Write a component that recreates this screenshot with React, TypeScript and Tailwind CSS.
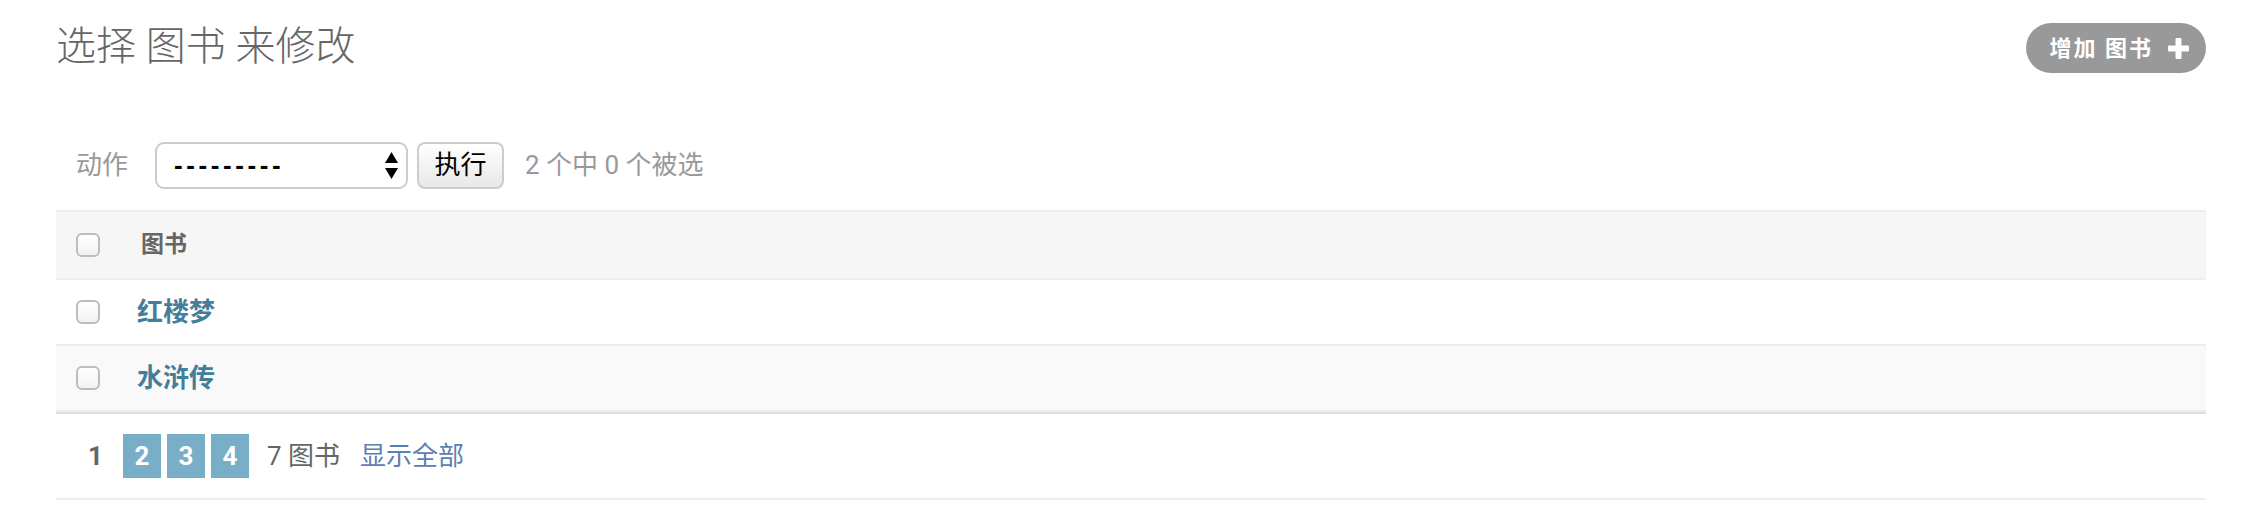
import React from 'react';

const books = [
  { id: 1, title: '红楼梦' },
  { id: 2, title: '水浒传' },
];

function Box() {
  return (
    <span className="block w-[24px] h-[24px] rounded-[6px] border-2 border-[#bdbdbd] bg-gradient-to-b from-white to-[#f2f2f2]" />
  );
}

export default function App() {
  return (
    <div className="min-h-[530px] bg-white pt-[23px] pl-[56px] pr-[48px] font-['Roboto','Noto_Sans_CJK_SC',sans-serif]">
      {/* header */}
      <div className="flex justify-between items-start">
        <h1 className="h-[48px] leading-[48px] text-[40px] font-light text-[#666]">选择 图书 来修改</h1>
        <a className="flex items-center h-[50px] pl-[24px] pr-[17px] rounded-full bg-[#999] text-white text-[22px] tracking-[2px] font-bold">
          <span>增加 图书</span>
          <svg className="ml-[15px]" width="21" height="21" viewBox="0 0 21 21">
            <rect x="0" y="7.5" width="21" height="6" rx="1" fill="#fff" />
            <rect x="7.5" y="0" width="6" height="21" rx="1" fill="#fff" />
          </svg>
        </a>
      </div>

      {/* actions */}
      <div className="mt-[47px] h-[90px] px-[20px] flex items-center text-[26px] text-[#999]">
        <span className="mr-[27px]">动作</span>
        <div className="relative w-[253px] h-[47px] rounded-[9px] border-2 border-[#ccc] bg-white flex items-center pl-[17px]">
          <span className="font-['Liberation_Sans',sans-serif] font-bold text-black text-[26px] tracking-[3.6px] leading-none">---------</span>
          <svg className="absolute right-[8px] top-[8px]" width="13" height="27" viewBox="0 0 13 27">
            <polygon points="6.5,0 13,11 0,11" fill="#000" />
            <polygon points="0,16 13,16 6.5,27" fill="#000" />
          </svg>
        </div>
        <button className="ml-[9px] w-[87px] h-[47px] rounded-[8px] border-2 border-[#ccc] bg-gradient-to-b from-white to-[#e8e8e8] text-black text-[26px] leading-none">
          执行
        </button>
        <span className="ml-[21px]">2 个中 0 个被选</span>
      </div>

      {/* results */}
      <div className="border-t-2 border-[#eee]">
        <div className="flex items-center h-[68px] bg-[#f6f6f6] border-b-2 border-[#eee]">
          <div className="w-[65px] pl-[20px]"><Box /></div>
          <span className="pl-[20px] text-[23px] font-bold text-[#666]">图书</span>
        </div>
        {books.map((b, i) => (
          <div
            key={b.id}
            className={`flex items-center h-[66px] border-b-2 border-[#eee] ${i % 2 === 1 ? 'bg-[#f9f9f9]' : 'bg-white'}`}
          >
            <div className="w-[65px] pl-[20px]"><Box /></div>
            <a className="pl-[16px] text-[26px] font-bold text-[#447e9b]">{b.title}</a>
          </div>
        ))}
      </div>

      {/* paginator */}
      <div className="border-t-2 border-[#ddd] border-b-2 border-b-[#eee] py-[20px] pl-[20px] flex items-center h-[88px] text-[26px] text-[#666]">
        <span className="px-[12px] font-bold leading-[44px]">1</span>
        <div className="ml-[8px] flex gap-[6px]">
          {[2, 3, 4].map((n) => (
            <a key={n} className="w-[38px] h-[44px] flex items-center justify-center bg-[#79aec8] text-white font-bold">
              {n}
            </a>
          ))}
        </div>
        <span className="ml-[18px]">7 图书</span>
        <a className="ml-[20px] text-[#5b80b2]">显示全部</a>
      </div>
    </div>
  );
}
